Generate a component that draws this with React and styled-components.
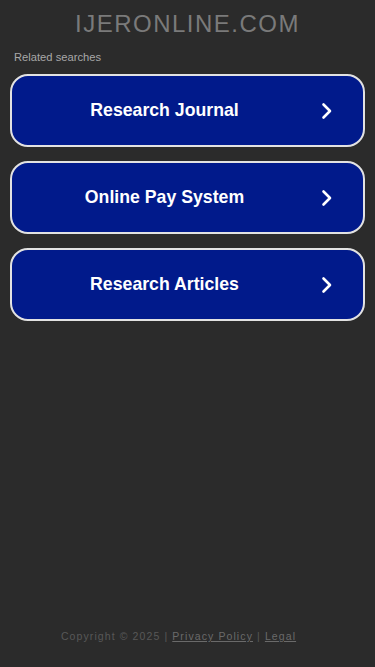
import React from 'react'
import styled, { createGlobalStyle } from 'styled-components'

const GlobalStyle = createGlobalStyle`
  html, body {
    margin: 0;
    padding: 0;
    background: #2b2b2b;
  }
  body {
    font-family: "Liberation Sans", Arial, sans-serif;
  }
`

const Page = styled.div`
  min-height: 667px;
  display: flex;
  flex-direction: column;
  box-sizing: border-box;
`

const Domain = styled.h1`
  margin: 0;
  padding-top: 10px;
  text-align: center;
  font-size: 24px;
  font-weight: normal;
  letter-spacing: 1.5px;
  color: #7a7a7a;
  line-height: 28px;
`

const Label = styled.div`
  margin: 12px 0 0 14px;
  font-size: 11.2px;
  color: #a8a8a8;
  line-height: 14px;
`

const List = styled.div`
  display: flex;
  flex-direction: column;
  gap: 14px;
  padding: 0 10px;
  margin-top: 10px;
`

const Item = styled.a`
  position: relative;
  display: flex;
  align-items: center;
  justify-content: center;
  height: 73px;
  box-sizing: border-box;
  padding-right: 46px;
  border: 2px solid #e2e2e2;
  border-radius: 18px;
  background: #011a8b;
  color: #fff;
  font-size: 17.7px;
  font-weight: bold;
  text-decoration: none;
`

const Chevron = styled.svg`
  position: absolute;
  right: 30px;
  top: 50%;
  transform: translateY(-50%);
`

const Footer = styled.div`
  margin-top: auto;
  padding: 0 18px 25px 0;
  text-align: center;
  font-size: 10.5px;
  letter-spacing: 1.1px;
  color: #585858;

  a {
    color: #6a6a6a;
    text-decoration: underline;
  }
`

const items = ['Research Journal', 'Online Pay System', 'Research Articles']

const App = () => (
  <Page>
    <GlobalStyle />
    <Domain>IJERONLINE.COM</Domain>
    <Label>Related searches</Label>
    <List>
      {items.map(title => (
        <Item key={title} href="#">
          {title}
          <Chevron width="12" height="18" viewBox="0 0 12 18">
            <path d="M2.5 2.5 L9 9 L2.5 15.5" fill="none" stroke="#fff" strokeWidth="2.6" strokeLinecap="round" strokeLinejoin="round" />
          </Chevron>
        </Item>
      ))}
    </List>
    <Footer>
      Copyright © 2025 | <a href="#">Privacy Policy</a> | <a href="#">Legal</a>
    </Footer>
  </Page>
)

export default App
